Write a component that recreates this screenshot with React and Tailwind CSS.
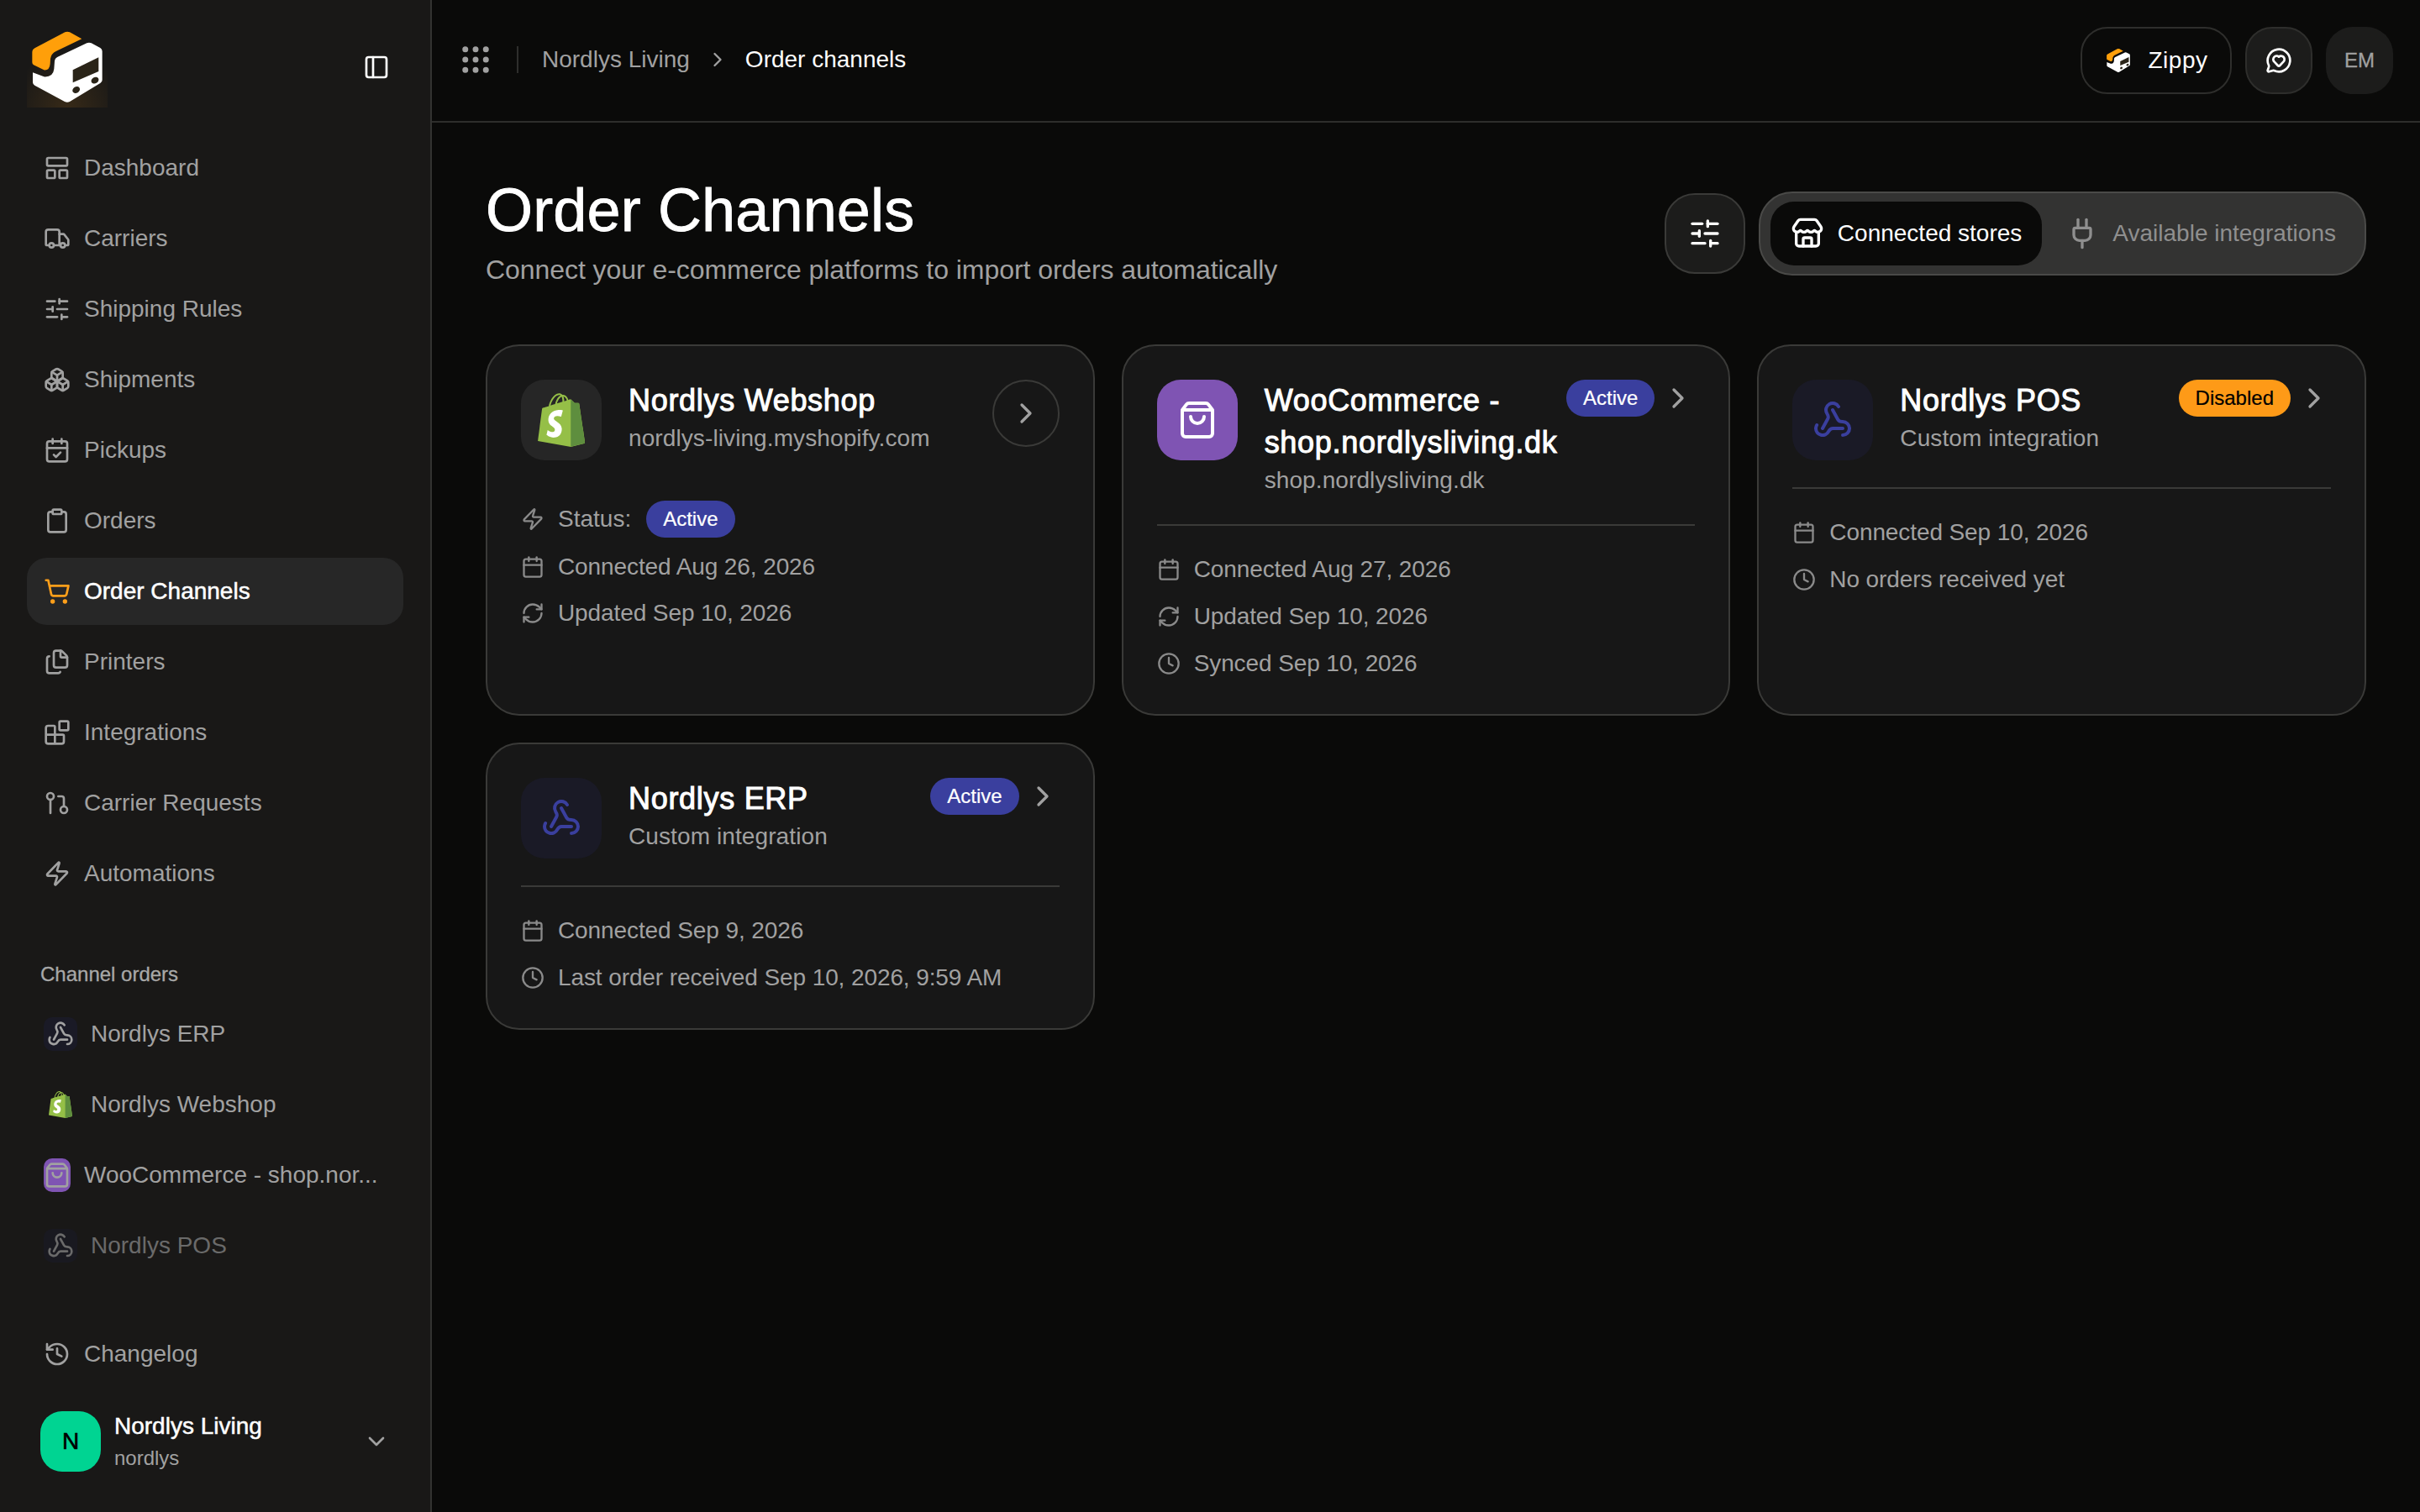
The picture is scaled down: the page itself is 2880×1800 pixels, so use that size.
import {
  Blocks, Boxes, Calendar, CalendarCheck, ChevronDown, ChevronRight, Clipboard, Clock, Files, GitPullRequest,
  Grip, History, LayoutPanelTop, MessageCircleHeart, PanelLeft, Plug, RefreshCw, ShoppingBag, ShoppingCart,
  SlidersHorizontal, Store, Truck, Webhook, Zap,
} from 'lucide-react';

const navItems = [
  { label: 'Dashboard', icon: LayoutPanelTop },
  { label: 'Carriers', icon: Truck },
  { label: 'Shipping Rules', icon: SlidersHorizontal },
  { label: 'Shipments', icon: Boxes },
  { label: 'Pickups', icon: CalendarCheck },
  { label: 'Orders', icon: Clipboard },
  { label: 'Order Channels', icon: ShoppingCart, active: true },
  { label: 'Printers', icon: Files },
  { label: 'Integrations', icon: Blocks },
  { label: 'Carrier Requests', icon: GitPullRequest },
  { label: 'Automations', icon: Zap },
];

function Logo({ className, glow }) {
  return (
    <svg viewBox="36 36 288 288" className={className}>
      <defs>
        <radialGradient id="logo-glow" cx="50%" cy="100%" r="70%">
          <stop offset="0%" stopColor="#ff9f1a" stopOpacity="0.13" />
          <stop offset="100%" stopColor="#ff9f1a" stopOpacity="0" />
        </radialGradient>
      </defs>
      {glow && <rect x="36" y="36" width="288" height="288" fill="url(#logo-glow)" />}
      <path
        d="M172 55 Q180 51 189 55 L232 79 L140 123 Q123 131 120 150 L119 168 Q117 192 97 190 L60 172 Q55 169 55 163 L55 127 Q55 117 64 112 Z"
        fill="#ff9f0a"
      />
      <path
        d="M250 94 Q258 90 266 94 L298 111 Q305 115 305 123 L305 226 Q305 233 298 237 L189 303 Q180 308 171 303 L64 245 Q57 241 57 234 L57 199 L97 214 Q130 216 133 186 L135 158 Q136 148 146 143 Z"
        fill="#fff"
      />
      <path d="M200 190 L292 145 L292 195 L200 235 Z" fill="#2a2418" />
      <ellipse cx="212" cy="261" rx="14" ry="11" transform="rotate(-30 212 261)" fill="#2a2418" />
      <ellipse cx="279" cy="227" rx="14" ry="11" transform="rotate(-30 279 227)" fill="#2a2418" />
    </svg>
  );
}

function ShopifyBag({ className }) {
  return (
    <svg viewBox="0 0 109 124" className={className}>
      <path
        d="M95.9 23.9c-.1-.6-.6-1-1.1-1-.5 0-9.3-.2-9.3-.2s-7.4-7.2-8.1-7.9c-.7-.7-2.2-.5-2.7-.3 0 0-1.4.4-3.7 1.1-.4-1.3-1-2.8-1.8-4.4-2.6-5-6.5-7.7-11.1-7.7-.3 0-.6 0-1 .1-.1-.2-.3-.3-.4-.5C54.7.9 52.1-.1 49 0c-6 .2-12 4.5-16.8 12.2-3.4 5.4-6 12.2-6.7 17.5-6.9 2.1-11.7 3.6-11.8 3.7-3.5 1.1-3.6 1.2-4 4.5-.3 2.5-9.5 73-9.5 73l76.4 13.2 33.1-8.2s-13.7-91.9-13.8-92.5zM67.2 16.8c-1.8.5-3.8 1.2-5.9 1.8 0-3-.4-7.3-1.8-10.9 4.6.9 6.8 6 7.7 9.1zm-10 3.1c-4 1.2-8.4 2.6-12.8 3.9 1.2-4.7 3.6-9.4 6.4-12.5 1.1-1.1 2.6-2.4 4.3-3.2 1.8 3.5 2.2 8.4 2.1 11.8zM49.1 4c1.4 0 2.6.3 3.6.9-1.6.8-3.2 2.1-4.7 3.6-3.8 4.1-6.7 10.5-7.9 16.6-3.6 1.1-7.2 2.2-10.5 3.2C31.7 18.8 39.8 4.3 49.1 4z"
        fill="#95BF47"
      />
      <path
        d="M94.8 22.9c-.5 0-9.3-.2-9.3-.2s-7.4-7.2-8.1-7.9c-.3-.3-.6-.4-1-.5V124l33.1-8.2S95.8 24.5 95.7 23.9c-.1-.6-.5-1-.9-1z"
        fill="#5E8E3E"
      />
      <path
        d="M58 39.9l-3.8 14.4s-4.3-2-9.4-1.6c-7.5.5-7.5 5.2-7.5 6.4.4 6.4 17.3 7.8 18.3 22.9.7 11.9-6.3 20-16.4 20.6-12.2.8-18.9-6.4-18.9-6.4l2.6-11s6.7 5.1 12.1 4.7c3.5-.2 4.8-3.1 4.7-5.1-.5-8.4-14.3-7.9-15.2-21.7-.7-11.6 6.9-23.4 23.7-24.4 6.5-.5 9.8 1.1 9.8 1.1z"
        fill="#FFF"
      />
    </svg>
  );
}

function Badge({ status }) {
  const disabled = status === 'Disabled';
  return (
    <span
      className={`flex h-[44px] shrink-0 items-center rounded-full px-[20px] text-[24px] [-webkit-text-stroke:0.2px] ${
        disabled ? 'bg-[#fe9a17] text-black' : 'bg-[#3a3f9e] text-white'
      }`}
    >
      {status}
    </span>
  );
}

function InfoRow({ icon: Icon, children }) {
  return (
    <div className="flex h-[40px] items-center gap-[16px] text-[28px] leading-[40px] tracking-[-0.1px] text-[#a1a1a1]">
      <Icon size={28} className="shrink-0 text-[#8a8a8a]" />
      <span>{children}</span>
    </div>
  );
}

function ChannelTile({ kind }) {
  if (kind === 'shopify') {
    return (
      <div className="flex h-[96px] w-[96px] shrink-0 items-center justify-center rounded-[28px] bg-[#262626]">
        <ShopifyBag className="h-[64px] w-[56px]" />
      </div>
    );
  }
  if (kind === 'woo') {
    return (
      <div className="flex h-[96px] w-[96px] shrink-0 items-center justify-center rounded-[28px] bg-[#7f54b3] text-white">
        <ShoppingBag size={48} />
      </div>
    );
  }
  return (
    <div className="flex h-[96px] w-[96px] shrink-0 items-center justify-center rounded-[28px] bg-[#1a1a26] text-[#3a3f9e]">
      <Webhook size={48} />
    </div>
  );
}

function ChannelCard({ kind, title, subtitle, status, rows, inlineStatus }) {
  return (
    <div className="rounded-[40px] border-2 border-[#3a3a38] bg-[#171717] p-[40px]">
      <div className={`flex items-start gap-[32px] ${inlineStatus ? '' : 'border-b-2 border-[#3a3a38] pb-[32px]'}`}>
        <ChannelTile kind={kind} />
        <div className="min-w-0 flex-1">
          <div className="text-[36px] leading-[50px] tracking-[0.7px] text-white [-webkit-text-stroke:1px]">{title}</div>
          <div className="text-[28px] leading-[40px] tracking-[0.1px] text-[#a1a1a1]">{subtitle}</div>
        </div>
        {inlineStatus ? (
          <button className="flex h-[80px] w-[80px] shrink-0 items-center justify-center rounded-full border-2 border-[#3a3a38] text-[#a1a1a1]">
            <ChevronRight size={40} />
          </button>
        ) : (
          <div className="flex shrink-0 items-center gap-[8px]">
            <Badge status={status} />
            <ChevronRight size={40} className="text-[#a1a1a1]" />
          </div>
        )}
      </div>
      <div className={`flex flex-col ${inlineStatus ? 'mt-[48px] gap-[15px]' : 'mt-[32px] gap-[16px]'}`}>
        {inlineStatus && (
          <div className="flex h-[44px] items-center gap-[16px] text-[28px] text-[#a1a1a1]">
            <Zap size={28} className="shrink-0 text-[#8a8a8a]" />
            <span>Status:</span>
            <span className="ml-[2px]">
              <Badge status={status} />
            </span>
          </div>
        )}
        {rows.map((row) => (
          <InfoRow key={row.text} icon={row.icon}>
            {row.text}
          </InfoRow>
        ))}
      </div>
    </div>
  );
}

function Sidebar() {
  return (
    <aside className="flex h-[1800px] w-[514px] shrink-0 flex-col border-r-2 border-[#333331] bg-[#191817]">
      <div className="flex h-[160px] items-start justify-between pl-[32px] pr-[48px] pt-[32px]">
        <Logo className="h-[96px] w-[96px]" glow />
        <PanelLeft size={32} className="mt-[32px] text-white" />
      </div>

      <nav className="flex flex-col gap-[4px] px-[32px]">
        {navItems.map(({ label, icon: Icon, active }) => (
          <a
            key={label}
            className={`flex h-[80px] items-center gap-[16px] rounded-[24px] px-[20px] text-[28px] ${
              active ? 'bg-[#272727] text-white [-webkit-text-stroke:0.5px]' : 'text-[#a1a1a1]'
            }`}
          >
            <Icon size={32} className={active ? 'text-[#ff9f1a]' : 'text-[#a1a1a1]'} />
            {label}
          </a>
        ))}
      </nav>

      <div className="ml-[48px] mt-[60px] text-[24px] leading-[40px] text-[#a8a8a8] [-webkit-text-stroke:0.3px]">
        Channel orders
      </div>
      <div className="mt-[11px] flex flex-col gap-[4px] px-[32px] text-[28px] text-[#a1a1a1]">
        <a className="flex h-[80px] items-center gap-[16px] pl-[20px]">
          <span className="flex h-[40px] w-[40px] items-center justify-center rounded-[10px] bg-[#1a1a26]">
            <Webhook size={32} className="shrink-0" />
          </span>
          Nordlys ERP
        </a>
        <a className="flex h-[80px] items-center gap-[16px] pl-[20px]">
          <span className="flex h-[40px] w-[40px] items-center justify-center">
            <ShopifyBag className="h-[32px] w-[28px]" />
          </span>
          Nordlys Webshop
        </a>
        <a className="flex h-[80px] items-center gap-[16px] pl-[20px]">
          <span className="flex h-[40px] w-[32px] shrink-0 items-center justify-center rounded-[10px] bg-[#7f54b3]">
            <ShoppingBag size={32} className="shrink-0" />
          </span>
          WooCommerce - shop.nor...
        </a>
        <a className="flex h-[80px] items-center gap-[16px] pl-[20px] opacity-60">
          <span className="flex h-[40px] w-[40px] items-center justify-center rounded-[10px] bg-[#1a1a26]">
            <Webhook size={32} className="shrink-0" />
          </span>
          Nordlys POS
        </a>
      </div>

      <div className="mt-auto px-[32px] pb-[47px]">
        <a className="flex h-[80px] items-center gap-[16px] px-[20px] text-[28px] text-[#a1a1a1]">
          <History size={32} />
          Changelog
        </a>
        <div className="mt-[27px] flex items-center pl-[16px] pr-[16px]">
          <span className="flex h-[72px] w-[72px] shrink-0 items-center justify-center rounded-[26px] bg-[#00d492] text-[28px] text-black [-webkit-text-stroke:0.6px]">
            N
          </span>
          <div className="ml-[16px] flex-1">
            <div className="text-[28px] leading-[38px] text-white [-webkit-text-stroke:0.5px]">Nordlys Living</div>
            <div className="mt-[2px] text-[24px] leading-[34px] text-[#a1a1a1]">nordlys</div>
          </div>
          <ChevronDown size={32} className="text-[#a1a1a1]" />
        </div>
      </div>
    </aside>
  );
}

function TopBar() {
  return (
    <header className="flex h-[146px] shrink-0 items-center justify-between border-b-2 border-[#2e2e2c] pl-[31px] pr-[32px]">
      <div className="flex items-center pb-[2px] text-[28px]">
        <Grip size={42} className="text-[#a1a1a1]" />
        <span className="ml-[28px] mr-[28px] h-[32px] w-[2px] bg-[#2e2e2c]" />
        <span className="text-[#a1a1a1]">Nordlys Living</span>
        <ChevronRight size={28} className="mx-[19px] text-[#a1a1a1]" />
        <span className="text-white">Order channels</span>
      </div>
      <div className="flex items-center gap-[16px]">
        <button className="flex h-[80px] w-[180px] items-center justify-center gap-[20px] rounded-[32px] border-2 border-[#2e2e2c] text-[28px] tracking-[0.5px] text-white">
          <Logo className="h-[32px] w-[32px]" />
          Zippy
        </button>
        <button className="flex h-[80px] w-[80px] items-center justify-center rounded-[32px] border-2 border-[#2e2e2c] bg-[#1c1c1b] text-white">
          <MessageCircleHeart size={32} />
        </button>
        <span className="flex h-[80px] w-[80px] items-center justify-center rounded-[32px] bg-[#1c1c1b] text-[24px] text-[#a1a1a1] [-webkit-text-stroke:0.3px]">
          EM
        </span>
      </div>
    </header>
  );
}

export default function App() {
  return (
    <div className="flex h-[1800px] w-[2880px] overflow-hidden bg-[#0a0a09] font-['Liberation_Sans',sans-serif]">
      <Sidebar />
      <main className="flex min-w-0 flex-1 flex-col">
        <TopBar />
        <div className="px-[64px] pt-[64px]">
          <div className="mb-[65px] flex items-center justify-between">
            <div>
              <h1 className="text-[72px] leading-[80px] tracking-[0.15px] text-white [-webkit-text-stroke:0.8px]">
                Order Channels
              </h1>
              <p className="mt-[7px] text-[32px] leading-[48px] tracking-[-0.06px] text-[#a1a1a1]">
                Connect your e-commerce platforms to import orders automatically
              </p>
            </div>
            <div className="flex items-center gap-[16px]">
              <button className="flex h-[96px] w-[96px] items-center justify-center rounded-[36px] border-2 border-[#3a3a38] bg-[#1c1c1b] text-white">
                <SlidersHorizontal size={40} />
              </button>
              <div className="flex h-[100px] items-center gap-[4px] rounded-[40px] border-2 border-[#4a4a48] bg-[#333332] py-[10px] pl-[12px] pr-[10px] text-[28px]">
                <button className="flex h-[76px] items-center gap-[16px] rounded-[28px] bg-[#0a0a09] px-[24px] text-white">
                  <Store size={40} />
                  Connected stores
                </button>
                <button className="flex h-[76px] items-center gap-[16px] rounded-[28px] px-[24px] text-[#8f8f8f]">
                  <Plug size={40} />
                  Available integrations
                </button>
              </div>
            </div>
          </div>

          <div className="grid grid-cols-3 gap-[32px]">
            <ChannelCard
              kind="shopify"
              title="Nordlys Webshop"
              subtitle="nordlys-living.myshopify.com"
              status="Active"
              inlineStatus
              rows={[
                { icon: Calendar, text: 'Connected Aug 26, 2026' },
                { icon: RefreshCw, text: 'Updated Sep 10, 2026' },
              ]}
            />
            <ChannelCard
              kind="woo"
              title="WooCommerce - shop.nordlysliving.dk"
              subtitle="shop.nordlysliving.dk"
              status="Active"
              rows={[
                { icon: Calendar, text: 'Connected Aug 27, 2026' },
                { icon: RefreshCw, text: 'Updated Sep 10, 2026' },
                { icon: Clock, text: 'Synced Sep 10, 2026' },
              ]}
            />
            <ChannelCard
              kind="webhook"
              title="Nordlys POS"
              subtitle="Custom integration"
              status="Disabled"
              rows={[
                { icon: Calendar, text: 'Connected Sep 10, 2026' },
                { icon: Clock, text: 'No orders received yet' },
              ]}
            />
            <ChannelCard
              kind="webhook"
              title="Nordlys ERP"
              subtitle="Custom integration"
              status="Active"
              rows={[
                { icon: Calendar, text: 'Connected Sep 9, 2026' },
                { icon: Clock, text: 'Last order received Sep 10, 2026, 9:59 AM' },
              ]}
            />
          </div>
        </div>
      </main>
    </div>
  );
}
